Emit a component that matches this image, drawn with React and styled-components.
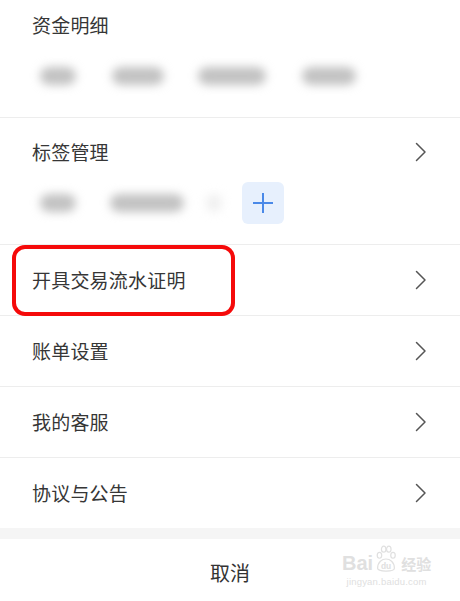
import React from "react";
import styled, { createGlobalStyle } from "styled-components";

const Global = createGlobalStyle`
  html, body { margin: 0; padding: 0; background: #fff; }
  body { font-family: "Noto Sans CJK SC", "Noto Sans", sans-serif; color: #333; }
`;

const Sheet = styled.div`
  width: 460px;
  height: 601px;
  overflow: hidden;
  background: #fff;
  display: flex;
  flex-direction: column;
  & > * { flex: none; }
`;

const Section = styled.div`
  display: flex;
  flex-direction: column;
  padding: ${(p) => p.$pad};
  border-bottom: 1px solid #ededed;
`;

const TitleRow = styled.div`
  display: flex;
  align-items: center;
  justify-content: space-between;
  height: 26px;
  padding-right: 33px;
`;

const Label = styled.span`
  font-size: 19px;
  line-height: 26px;
  color: #363636;
  letter-spacing: 0.2px;
`;

const ChipRow = styled.div`
  display: flex;
  align-items: center;
  height: ${(p) => p.$h}px;
  margin-top: ${(p) => p.$mt}px;
`;

const Blur = styled.div`
  flex: none;
  width: ${(p) => p.$w}px;
  height: 18px;
  margin-left: ${(p) => p.$ml}px;
  border-radius: 9px;
  background: ${(p) => p.$c || "#c2c2c2"};
  filter: blur(5px);
`;

const AddBtn = styled.div`
  flex: none;
  width: 42px;
  height: 42px;
  margin-left: ${(p) => p.$ml}px;
  border-radius: 6px;
  background: #e7f0fd;
  display: flex;
  align-items: center;
  justify-content: center;
`;

const Row = styled.div`
  position: relative;
  height: 70px;
  display: flex;
  align-items: center;
  justify-content: space-between;
  padding: 0 33px 0 32px;
  border-bottom: ${(p) => (p.$last ? "none" : "1px solid #ededed")};
`;

const Highlight = styled.div`
  position: absolute;
  left: 12px;
  top: 0px;
  width: 223px;
  height: 71px;
  box-sizing: border-box;
  border: 4.5px solid #f50a0a;
  border-radius: 13px;
  pointer-events: none;
`;

const Band = styled.div`
  height: 11px;
  background: #f5f5f5;
`;

const Cancel = styled.div`
  position: relative;
  height: 66px;
  display: flex;
  align-items: center;
  justify-content: center;
  font-size: 20px;
  color: #333;
`;

const Watermark = styled.div`
  position: absolute;
  left: 342px;
  top: 6px;
  display: flex;
  flex-direction: column;
  align-items: center;
  white-space: nowrap;
  color: #e0e0e0;
  font-family: "Liberation Sans", Arial, sans-serif;
  pointer-events: none;
`;

const WmTop = styled.div`
  display: flex;
  align-items: flex-end;
  font-size: 20px;
  font-weight: bold;
  line-height: 20px;
  gap: 1px;
`;

const WmCJK = styled.span`
  font-family: "Noto Sans CJK SC", sans-serif;
  font-size: 15px;
  line-height: 19px;
  margin-left: 2px;
`;

const WmSub = styled.div`
  font-size: 9.5px;
  margin-top: 3px;
  letter-spacing: 0.2px;
`;

const Chevron = () => (
  <svg width="12" height="20" viewBox="0 0 12 20">
    <path d="M1.5 1.5 L10 10 L1.5 18.5" fill="none" stroke="#555" strokeWidth="1.5" strokeLinecap="round" strokeLinejoin="round" />
  </svg>
);

const Plus = () => (
  <svg width="22" height="22" viewBox="0 0 22 22">
    <path d="M11 1 V21 M1 11 H21" stroke="#4a89e8" strokeWidth="2" />
  </svg>
);

const Paw = () => (
  <svg width="24" height="28" viewBox="0 0 24 30">
    <g fill="none" stroke="#e0e0e0" strokeWidth="1.3">
      <ellipse cx="5" cy="11" rx="2.4" ry="3.2" />
      <ellipse cx="9.5" cy="4.5" rx="2.4" ry="3.2" />
      <ellipse cx="15" cy="4.5" rx="2.4" ry="3.2" />
      <ellipse cx="19.5" cy="11" rx="2.4" ry="3.2" />
      <path d="M3 25 C3 18 8 15 12 15 C16 15 21 18 21 25 C21 29 3 29 3 25 Z" />
    </g>
    <text x="12" y="26" fontSize="9" textAnchor="middle" fill="#e0e0e0" fontFamily="Liberation Sans, sans-serif" fontWeight="bold">du</text>
  </svg>
);

const rows = ["开具交易流水证明", "账单设置", "我的客服", "协议与公告"];

export default function App() {
  return (
    <Sheet>
      <Global />
      <Section $pad="12px 0 26px 32px">
        <TitleRow>
          <Label>资金明细</Label>
        </TitleRow>
        <ChipRow $h={30} $mt={23}>
          <Blur $w={36} $ml={8} />
          <Blur $w={52} $ml={36} />
          <Blur $w={68} $ml={34} />
          <Blur $w={54} $ml={36} />
        </ChipRow>
      </Section>
      <Section $pad="21px 0 20px 32px">
        <TitleRow>
          <Label>标签管理</Label>
          <Chevron />
        </TitleRow>
        <ChipRow $h={42} $mt={17}>
          <Blur $w={36} $ml={8} />
          <Blur $w={74} $ml={34} />
          <Blur $w={16} $ml={22} $c="#f0f0f0" />
          <AddBtn $ml={20}>
            <Plus />
          </AddBtn>
        </ChipRow>
      </Section>
      {rows.map((r, i) => (
        <Row key={r} $last={i === rows.length - 1}>
          {i === 0 && <Highlight />}
          <Label>{r}</Label>
          <Chevron />
        </Row>
      ))}
      <Band />
      <Cancel>
        取消
        <Watermark>
          <WmTop>
            <span>Bai</span>
            <Paw />
            <WmCJK>经验</WmCJK>
          </WmTop>
          <WmSub>jingyan.baidu.com</WmSub>
        </Watermark>
      </Cancel>
    </Sheet>
  );
}
